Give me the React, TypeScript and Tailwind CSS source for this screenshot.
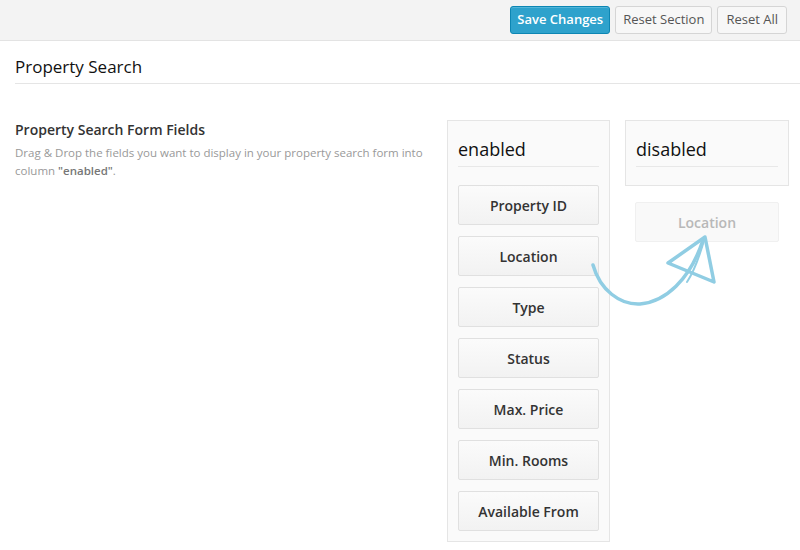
import React from "react";

const items = ["Property ID", "Location", "Type", "Status", "Max. Price", "Min. Rooms", "Available From"];

export default function App() {
  return (
    <div className="relative w-[800px] h-[550px] overflow-hidden bg-white text-[#333]" style={{ fontFamily: '"Open Sans", "Noto Sans", sans-serif' }}>
      <div className="h-[41px] bg-[#f3f3f3] border-b border-[#e3e3e3] flex items-center justify-end gap-[5px] pr-[13px]">
        <button className="h-[28px] px-[6px] rounded-[3px] bg-[#2ea2cc] border border-[#0d86b3] text-white text-[13px] font-semibold shadow-[inset_0_1px_0_rgba(120,200,230,0.5)]">Save Changes</button>
        <button className="h-[28px] px-[7px] rounded-[3px] bg-[#f7f7f7] border border-[#d5d5d5] text-[#555] text-[13px]">Reset Section</button>
        <button className="h-[28px] px-[8px] rounded-[3px] bg-[#f7f7f7] border border-[#d5d5d5] text-[#555] text-[13px]">Reset All</button>
      </div>
      <div className="pl-[15px]">
        <div className="pt-[14px] pb-[4px] border-b border-[#e5e5e5]">
          <h2 className="text-[17px] leading-[24px] text-[#111]">Property Search</h2>
        </div>
        <div className="flex pt-[36px]">
          <div className="w-[432px] pr-[8px]">
            <h3 className="text-[14px] font-semibold leading-[18px] text-[#333] mt-[1px]">Property Search Form Fields</h3>
            <p className="text-[11.5px] leading-[18px] text-[#999] mt-[5px]">
              Drag &amp; Drop the fields you want to display in your property search form into column <span className="font-semibold text-[#777]">"enabled"</span>.
            </p>
          </div>
          <div className="w-[163px] border border-[#e5e5e5] bg-[#fafafa] px-[10px] pt-[16px] pb-[10px]">
            <div className="text-[18px] leading-[24px] text-[#111] pb-[5px] border-b border-[#e8e8e8]">enabled</div>
            <div className="flex flex-col gap-[11px] mt-[18px]">
              {items.map((t) => (
                <div key={t} className="h-[40px] flex items-center justify-center rounded-[2px] border border-[#e0e0e0] bg-gradient-to-b from-[#fbfbfb] to-[#f2f2f2] text-[14px] font-semibold text-[#333]">
                  {t}
                </div>
              ))}
            </div>
          </div>
          <div className="ml-[15px] w-[164px]">
            <div className="border border-[#e5e5e5] bg-[#fafafa] px-[10px] pt-[16px] pb-[18px]">
              <div className="text-[18px] leading-[24px] text-[#111] pb-[5px] border-b border-[#e8e8e8]">disabled</div>
            </div>
            <div className="px-[10px] mt-[16px]">
              <div className="h-[40px] flex items-center justify-center rounded-[2px] border border-[#f0f0f0] bg-[#f9f9f9] text-[14px] font-semibold text-[#b8b8b8]">
                Location
              </div>
            </div>
          </div>
        </div>
      </div>
      <svg className="absolute left-0 top-0 pointer-events-none" width="800" height="550" viewBox="0 0 800 550">
        <g fill="none" stroke="#90cde3" strokeWidth="3.5" strokeLinecap="round" strokeLinejoin="round">
          <path d="M593 265 C 600 290, 620 305, 640 304 C 665 302, 690 280, 703 240" />
          <path d="M705 237 L 668 263 L 714 282 Z" />
          <path d="M705 237 C 700 255, 695 270, 687 282" strokeWidth="2" />
        </g>
      </svg>
    </div>
  );
}
